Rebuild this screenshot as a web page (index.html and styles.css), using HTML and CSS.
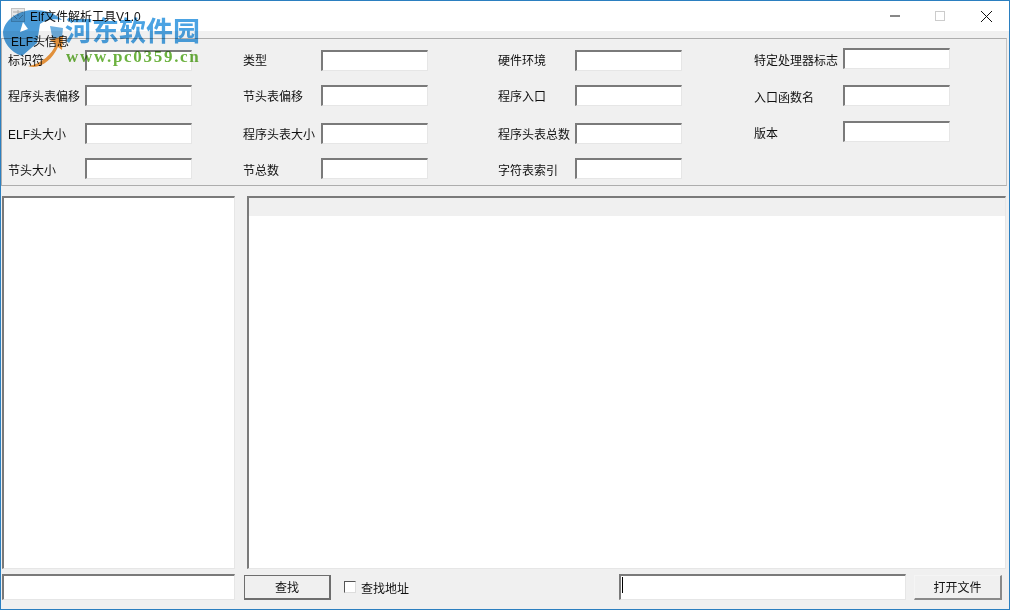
FILE: index.html
```html
<!DOCTYPE html>
<html lang="zh-CN">
<head>
    <meta charset="UTF-8">
    <title>Elf文件解析工具V1.0</title>
    <link rel="stylesheet" href="styles.css">
</head>
<body>
    <div class="window">
        <!-- Barre de titre -->
        <div class="titlebar">
            <svg class="app-icon" width="16" height="16" viewBox="0 0 16 16">
                <rect x="1.500" y="1.500" width="13" height="13" fill="#e8e8e8" stroke="#c4c4c4"/>
                <path d="M3 5h10M3 8l4 4M13 8l-4 4M8 3v6" stroke="#aaa" fill="none"/>
            </svg>
            <span class="title-text">Elf文件解析工具V1.0</span>
            <div class="controls">
                <svg width="46" height="30" viewBox="0 0 46 30"><path d="M19 15h10" stroke="#111"/></svg>
                <svg width="46" height="30" viewBox="0 0 46 30"><rect x="18.500" y="10.500" width="9" height="9" fill="none" stroke="#ccc"/></svg>
                <svg width="46" height="30" viewBox="0 0 46 30"><path d="M18 10l11 11M29 10l-11 11" stroke="#111"/></svg>
            </div>
        </div>

        <div class="content">
            <!-- Informations ELF -->
            <div class="group">
                <span class="group-title">ELF头信息</span>
                <div class="fields">
                    <label>标识符</label><input class="field">
                    <label>类型</label><input class="field">
                    <label>硬件环境</label><input class="field">
                    <label>特定处理器标志</label><input class="field field-up">

                    <label class="low-1">程序头表偏移</label><input class="field">
                    <label class="low-1">节头表偏移</label><input class="field">
                    <label class="low-1">程序入口</label><input class="field">
                    <label class="low-2">入口函数名</label><input class="field">

                    <label class="low-1">ELF头大小</label><input class="field">
                    <label class="low-1">程序头表大小</label><input class="field">
                    <label class="low-1">程序头表总数</label><input class="field">
                    <label>版本</label><input class="field field-up">

                    <label class="low-2">节头大小</label><input class="field">
                    <label class="low-2">节总数</label><input class="field">
                    <label class="low-2">字符表索引</label><input class="field">
                </div>
            </div>

            <!-- Panneaux -->
            <div class="panels">
                <div class="panel panel-left"></div>
                <div class="panel panel-right">
                    <div class="panel-header"></div>
                </div>
            </div>

            <!-- Barre du bas -->
            <div class="bottom">
                <input class="field search-input">
                <button class="btn btn-search">查找</button>
                <label class="check"><span class="check-box"></span>查找地址</label>
                <div class="field path-input"><span class="caret"></span></div>
                <button class="btn btn-open">打开文件</button>
            </div>
        </div>

        <!-- Filigrane -->
        <div class="watermark">
            <svg class="wm-logo" width="62" height="60" viewBox="0 0 62 60">
                <path d="M0 22C2 8 17 0 32 0c11 0 21 4 27 10-8-2-17 0-22 4l-3 19-15 13C7 42 0 32 0 22z" fill="#4a9bd8"/>
                <path d="M47 16l13 2-1 10-9 3z" fill="#6fb0e0"/>
                <path d="M20 12l5 7-8 3z" fill="#fff"/>
                <path d="M25 56c14-2 24-12 28-22l-6-4 13-4-1 14-4-3C49 50 37 60 25 56z" fill="#f0993e"/>
            </svg>
            <span class="wm-name">河东软件园</span>
            <span class="wm-url">www.pc0359.cn</span>
        </div>
    </div>
</body>
</html>
```

FILE: styles.css
```css
* {
    margin: 0;
    padding: 0;
    box-sizing: border-box;
}

body {
    width: 1010px;
    height: 610px;
    overflow: hidden;
    font-family: "Liberation Sans", "Noto Sans CJK SC", sans-serif;
    font-size: 12px;
    color: #111;
}

.window {
    position: relative;
    width: 1010px;
    height: 610px;
    border: 1px solid #2b7fc0;
    background-color: #f0f0f0;
    display: flex;
    flex-direction: column;
}

.titlebar {
    height: 30px;
    background-color: #fff;
    display: flex;
    align-items: center;
    flex-shrink: 0;
}

.app-icon {
    margin-left: 9px;
    margin-top: -2px;
}

.title-text {
    margin-left: 4px;
    margin-top: -1px;
}

.controls {
    margin-left: auto;
    display: flex;
    margin-top: -1px;
}

.controls svg {
    display: block;
}

.content {
    flex: 1;
    display: flex;
    flex-direction: column;
    padding-top: 7px;
}

.group {
    position: relative;
    height: 148px;
    margin-right: 2px;
    border: 1px solid #adadad;
    border-right-color: #c4c4c4;
    padding: 11px 0 0 6px;
}

.group-title {
    position: absolute;
    left: 9px;
    top: -7px;
}

.fields {
    display: grid;
    grid-template-columns: 77px 158px 78px 177px 77px 179px 89px 107px;
    grid-template-rows: 35px 38px 35px 22px;
    align-items: start;
}

.fields label {
    line-height: 22px;
}

.fields .low-1 {
    padding-top: 1px;
}

.fields .low-2 {
    padding-top: 2px;
}

.field {
    display: block;
    width: 107px;
    height: 21px;
    background-color: #fff;
    border-style: solid;
    border-width: 2px 1px 1px 2px;
    border-color: #7a7a7a #e6e6e6 #e6e6e6 #7a7a7a;
    outline: none;
}

.field-up {
    margin-top: -2px;
}

.panels {
    height: 373px;
    margin-top: 10px;
    display: flex;
    flex-shrink: 0;
    padding-left: 1px;
}

.panel {
    background-color: #fff;
    border-style: solid;
    border-width: 2px 1px 1px 2px;
    border-color: #7a7a7a #e6e6e6 #e6e6e6 #7a7a7a;
}

.panel-left {
    width: 233px;
}

.panel-right {
    width: 759px;
    margin-left: 12px;
}

.panel-header {
    height: 18px;
    background-color: #f0f0f0;
}

.bottom {
    display: flex;
    align-items: center;
    margin-top: 5px;
    padding-left: 1px;
}

.search-input {
    width: 233px;
    height: 26px;
}

.btn {
    height: 25px;
    font-family: inherit;
    font-size: 12px;
    color: #111;
    background-color: #f0f0f0;
    border-style: solid;
    border-width: 1px 2px 2px 1px;
    border-color: #f5f5f5 #8a8a8a #8a8a8a #f5f5f5;
}

.btn-search {
    width: 87px;
    margin-left: 9px;
    border-color: #6e6e6e;
}

.check {
    display: flex;
    align-items: center;
    margin-left: 13px;
}

.check-box {
    width: 12px;
    height: 12px;
    margin-right: 5px;
    background-color: #fff;
    border-style: solid;
    border-width: 1px;
    border-color: #555 #ddd #ddd #555;
}

.path-input {
    width: 287px;
    height: 26px;
    margin-left: 210px;
    padding: 1px 0 0 1px;
}

.caret {
    display: block;
    width: 1px;
    height: 16px;
    background-color: #000;
}

.btn-open {
    width: 88px;
    margin-left: 8px;
}

.watermark {
    position: absolute;
    left: 0;
    top: 0;
    width: 210px;
    height: 70px;
    pointer-events: none;
    mix-blend-mode: multiply;
}

.wm-logo {
    position: absolute;
    left: 2px;
    top: 9px;
}

.wm-name {
    position: absolute;
    left: 64px;
    top: 11px;
    font-family: "Noto Sans CJK SC", sans-serif;
    font-size: 27px;
    font-weight: 700;
    line-height: 36px;
    white-space: nowrap;
    color: #4ba3e3;
}

.wm-url {
    position: absolute;
    left: 65px;
    top: 47px;
    font-family: "Liberation Serif", serif;
    font-size: 17px;
    font-weight: 700;
    line-height: 18px;
    white-space: nowrap;
    letter-spacing: 1.7px;
    color: #6cb23f;
}
```
